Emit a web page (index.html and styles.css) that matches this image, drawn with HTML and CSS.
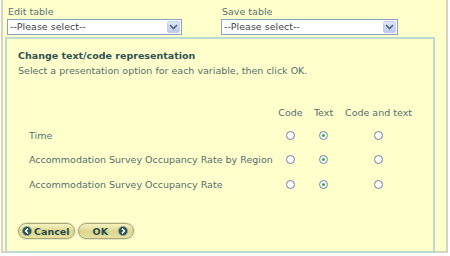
FILE: index.html
```html
<!DOCTYPE html>
<html lang="en">
<head>
    <meta charset="UTF-8">
    <title>Change text/code representation</title>
    <link rel="stylesheet" href="styles.css">
</head>
<body>
    <div class="page">
        <div class="pickers">
            <div class="picker picker-edit">
                <label class="picker-label">Edit table</label>
                <div class="select select-edit">
                    <span class="select-text">--Please select--</span>
                    <span class="select-arrow"><svg width="9" height="6" viewBox="0 0 9 6"><path d="M1 1 L4.5 4.5 L8 1" fill="none" stroke="#4d6185" stroke-width="1.6"/></svg></span>
                </div>
            </div>
            <div class="picker picker-save">
                <label class="picker-label">Save table</label>
                <div class="select select-save">
                    <span class="select-text">--Please select--</span>
                    <span class="select-arrow"><svg width="9" height="6" viewBox="0 0 9 6"><path d="M1 1 L4.5 4.5 L8 1" fill="none" stroke="#4d6185" stroke-width="1.6"/></svg></span>
                </div>
            </div>
        </div>

        <div class="panel">
            <h3 class="panel-title">Change text/code representation</h3>
            <p class="panel-intro">Select a presentation option for each variable, then click OK.</p>

            <!-- one row per variable -->
            <div class="options">
                <div></div>
                <div class="opt-head">Code</div>
                <div class="opt-head">Text</div>
                <div class="opt-head">Code and text</div>

                <div class="opt-label">Time</div>
                <div class="opt-cell"><span class="radio"></span></div>
                <div class="opt-cell"><span class="radio checked"></span></div>
                <div class="opt-cell"><span class="radio"></span></div>

                <div class="opt-label">Accommodation Survey Occupancy Rate by Region</div>
                <div class="opt-cell"><span class="radio"></span></div>
                <div class="opt-cell"><span class="radio checked"></span></div>
                <div class="opt-cell"><span class="radio"></span></div>

                <div class="opt-label">Accommodation Survey Occupancy Rate</div>
                <div class="opt-cell"><span class="radio"></span></div>
                <div class="opt-cell"><span class="radio checked"></span></div>
                <div class="opt-cell"><span class="radio"></span></div>
            </div>

            <div class="buttons">
                <button class="btn btn-cancel">
                    <svg class="btn-icon" width="10" height="10" viewBox="0 0 10 10"><circle cx="5" cy="5" r="4.6" fill="#2b5352" stroke="#8ea39a" stroke-width="0.8"/><path d="M6 2.6 L3.6 5 L6 7.4" fill="none" stroke="#fff" stroke-width="1.5"/></svg>
                    Cancel
                </button>
                <button class="btn btn-ok">
                    OK
                    <svg class="btn-icon" width="10" height="10" viewBox="0 0 10 10"><circle cx="5" cy="5" r="4.6" fill="#2b5352" stroke="#8ea39a" stroke-width="0.8"/><path d="M4 2.6 L6.4 5 L4 7.4" fill="none" stroke="#fff" stroke-width="1.5"/></svg>
                </button>
            </div>
        </div>
    </div>
</body>
</html>
```

FILE: styles.css
```css
body {
    margin: 0;
    background: #ffffff;
    font-family: "DejaVu Sans", Verdana, sans-serif;
    font-size: 9.5px;
    color: #537070;
}
.page {
    margin: 0 2px 0 1px;
    height: 253px;
    box-sizing: border-box;
    background: #ffffcc;
    border: 2px solid #d5d3c2;
    border-top: none;
    padding: 5px 0 0 2px;
}
.pickers {
    display: flex;
    height: 32px;
}
.picker {
    display: flex;
    flex-direction: column;
}
.picker-edit {
    margin-left: 2px;
    width: 214px;
}
.picker-label {
    padding-left: 1px;
    line-height: 14px;
    color: #557272;
}
.select {
    display: flex;
    align-items: center;
    background: #fff;
    border: 1px solid #8aa4c0;
    box-sizing: border-box;
    height: 16px;
}
.select-edit {
    width: 175px;
}
.select-save {
    width: 177px;
}
.select-text {
    flex: 1;
    padding-left: 2px;
    color: #444;
    line-height: 14px;
}
.select-arrow {
    width: 13px;
    height: 12px;
    margin-right: 1px;
    display: flex;
    align-items: center;
    justify-content: center;
    background: linear-gradient(#dfe8f8, #b9caea);
    border: 1px solid #c3d1ec;
    box-sizing: border-box;
    border-radius: 2px;
}
.panel {
    width: 430px;
    height: 216px;
    box-sizing: border-box;
    border: 2px solid #bcdad2;
    padding: 10px 0 0 11px;
}
.panel-title {
    margin: 0;
    font-size: 9.5px;
    line-height: 14px;
    color: #2f5252;
}
.panel-intro {
    margin: 1px 0 0;
    line-height: 14px;
}
.options {
    display: grid;
    grid-template-columns: 246px 31px 35px 75px;
    grid-template-rows: 24px 23px 25px 24px;
    align-items: center;
    margin: 22px 0 0 11px;
    white-space: nowrap;
}
.opt-head {
    text-align: center;
}
.opt-cell {
    display: flex;
    justify-content: center;
}
.radio {
    width: 9px;
    height: 9px;
    box-sizing: border-box;
    border: 1px solid #7286a6;
    border-radius: 50%;
    background: radial-gradient(#ffffff 40%, #e6ebf2);
    position: relative;
}
.radio.checked::after {
    content: "";
    position: absolute;
    left: 2px;
    top: 2px;
    width: 3px;
    height: 3px;
    border-radius: 50%;
    background: #2fae3a;
}
.buttons {
    display: flex;
    gap: 3px;
    margin-top: 27px;
}
.btn {
    display: flex;
    align-items: center;
    gap: 2px;
    height: 16px;
    padding: 0 3px;
    font-family: "DejaVu Sans", Verdana, sans-serif;
    font-size: 9.5px;
    font-weight: bold;
    color: #1f4b4b;
    border: 1px solid #aaa671;
    border-radius: 8px;
    background: linear-gradient(#f6f3c2, #dcd68c 55%, #e6e2a4);
    box-shadow: 0 0 0 1px #e8e6c0;
}
.btn-cancel {
    width: 57px;
}
.btn-ok {
    width: 56px;
    justify-content: flex-end;
    gap: 10px;
    padding-right: 5px;
}
.btn-icon {
    flex: none;
}
```
